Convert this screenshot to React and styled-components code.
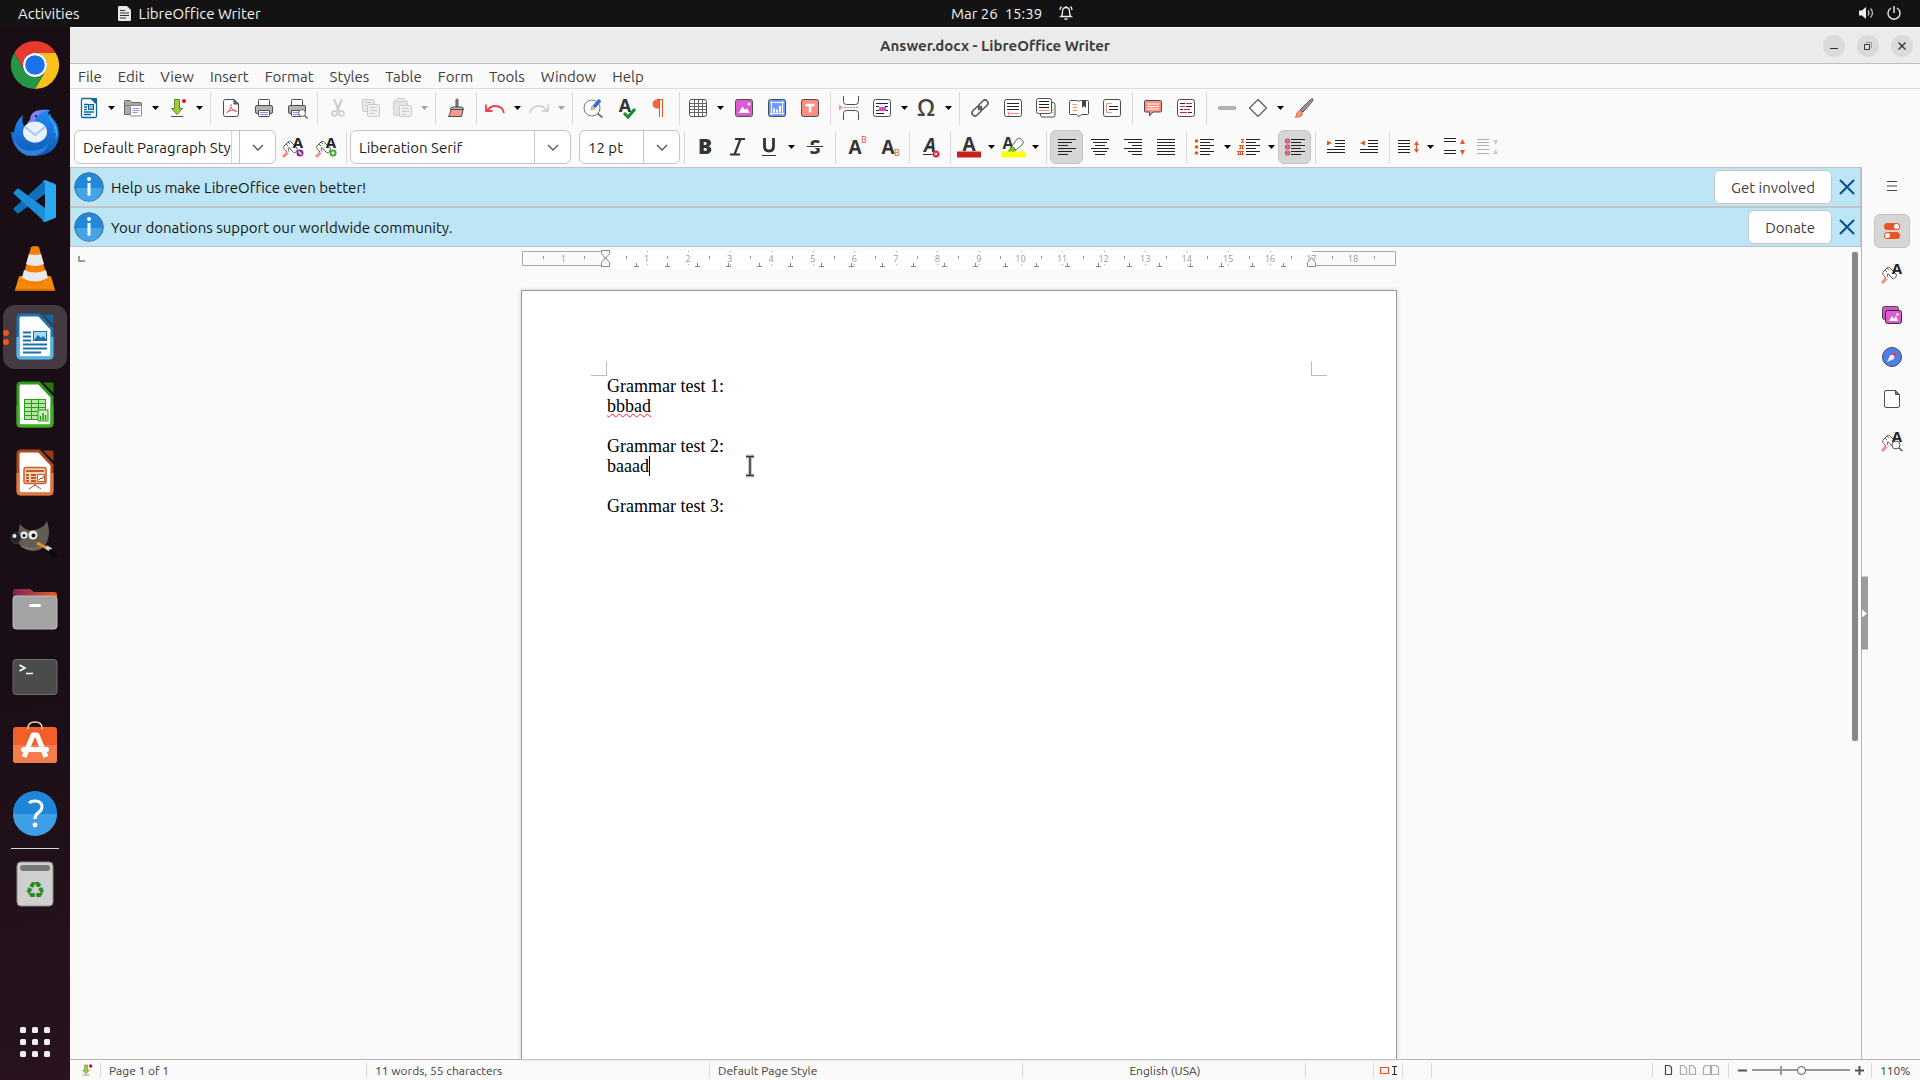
import styled, { createGlobalStyle } from 'styled-components';

const GlobalStyle = createGlobalStyle`
    *{
        box-sizing: border-box;
    }
    body{
        margin: 0;
        background: #fafafa;
        color: #3d3d3d;
        font-family: Ubuntu, "Open Sans", sans-serif;
        font-size: 15px;
    }
    button, select, input{
        font: inherit;
        color: inherit;
        margin: 0;
    }
    p{
        margin: 0;
    }
    svg{
        display: block;
        flex: none;
        overflow: visible;
    }
    svg text{
        font-family: "Open Sans", sans-serif;
    }
`

const Desktop = styled.div`
    height: 100vh;
    display: flex;
    flex-direction: column;
    overflow: hidden;
`

const TopBar = styled.header`
    height: 27px;
    flex: none;
    display: grid;
    grid-template-columns: calc(50% - 9px) 1fr auto;
    align-items: center;
    padding-bottom: 1px;
    background: #131313;
    color: #f2f2f2;
    white-space: pre;
`

const TopGroup = styled.div`
    display: flex;
    align-items: center;
    gap: ${p => p.$gap}px;
    padding: 0 ${p => p.$pad}px;
`

const AppName = styled.div`
    display: flex;
    align-items: center;
    gap: 8px;
`

const Screen = styled.div`
    flex: 1;
    min-height: 0;
    display: flex;
`

const Dock = styled.nav`
    width: 70px;
    flex: none;
    display: flex;
    flex-direction: column;
    align-items: center;
    gap: 4px;
    padding: 6px 0;
    background: linear-gradient(165deg, #1a0e16 60%, #28131f);
`

const DockItem = styled.button`
    width: 64px;
    height: 64px;
    flex: none;
    display: flex;
    align-items: center;
    justify-content: center;
    padding: 0;
    border: 0;
    border-radius: 12px;
    background: ${p => p.$active ? '#433b41' : 'none'};
    position: relative;
`

const RunningDots = styled.span`
    position: absolute;
    left: 0;
    top: 25px;
    display: grid;
    gap: 3px;
    i{
        width: 6px;
        height: 6px;
        border-radius: 3px;
        background: #e95420;
    }
`

const DockLine = styled.hr`
    width: 48px;
    height: 1px;
    margin: -1px 0;
    border: 0;
    flex: none;
    background: #d8d4d6;
`

const DockSpace = styled.div`
    flex: 1;
`

const Window = styled.main`
    flex: 1;
    min-width: 0;
    display: flex;
    flex-direction: column;
`

const TitleBar = styled.div`
    height: 37px;
    flex: none;
    display: grid;
    grid-template-columns: 1fr auto 1fr;
    align-items: center;
    background: #ebebeb;
    border-top: 1px solid #fff;
    border-bottom: 1px solid #bfbfbf;
    h1{
        grid-column: 2;
        margin: 0;
        font-size: 15px;
        font-weight: bold;
    }
`

const WindowButtons = styled.div`
    display: flex;
    justify-content: flex-end;
    gap: 12px;
    padding-right: 7px;
    button{
        width: 22px;
        height: 22px;
        padding: 0;
        border: 0;
        border-radius: 11px;
        background: #dadada;
    }
`

const MenuBar = styled.nav`
    height: 25px;
    flex: none;
    display: flex;
    align-items: center;
    padding-top: 1px;
    border-bottom: 1px solid #dcdcdc;
    button{
        border: 0;
        background: none;
        padding: 0 8px;
        line-height: 20px;
    }
`

const Toolbar = styled.div`
    height: ${p => p.$height}px;
    flex: none;
    display: flex;
    align-items: center;
    padding-left: 4px;
`

const Tool = styled.button`
    width: ${p => p.$drop ? 44 : 33}px;
    height: 34px;
    flex: none;
    display: flex;
    align-items: center;
    justify-content: ${p => p.$drop ? 'flex-start' : 'center'};
    gap: 7px;
    padding: 0 0 0 ${p => p.$drop ? 3 : 0}px;
    border: 1px solid ${p => p.$active ? '#c3c3c3' : 'transparent'};
    border-width: ${p => p.$active ? 1 : 0}px;
    border-radius: 6px;
    background: ${p => p.$active ? '#d6d6d6' : 'none'};
    opacity: ${p => p.$dim ? 0.35 : 1};
`

const Separator = styled.span`
    width: 1px;
    height: 33px;
    flex: none;
    margin: 0 3px 0 4px;
    background: ${p => p.$hidden ? 'transparent' : '#dadada'};
`

const Combo = styled.div`
    width: ${p => p.$width}px;
    height: 34px;
    flex: none;
    display: flex;
    border: 1px solid #c4c4c4;
    border-radius: 6px;
    background: #fff;
    color: #1c1c1c;
    overflow: hidden;
    select{
        flex: 1;
        min-width: 0;
        appearance: none;
        border: 0;
        border-right: ${p => p.$split ? '1px solid #d4d4d4' : '0'};
        margin-right: ${p => p.$split ? 7 : 0}px;
        padding: 0 0 0 8px;
        background: none;
        color: #1c1c1c;
        text-overflow: clip;
    }
    button{
        width: 36px;
        display: flex;
        align-items: center;
        justify-content: center;
        padding: 0;
        border: 0;
        border-left: 1px solid #c4c4c4;
        background: none;
    }
`

const Body = styled.div`
    flex: 1;
    min-height: 0;
    display: flex;
`

const Editor = styled.section`
    flex: 1;
    min-width: 0;
    display: flex;
    flex-direction: column;
`

const InfoBar = styled.div`
    height: 40px;
    flex: none;
    display: flex;
    align-items: center;
    padding: 0 5px 0 3px;
    border: 1px solid #c3c3c3;
    background: #bce5f6;
    color: #141414;
    p{
        flex: 1;
        padding-left: 7px;
    }
`

const InfoButton = styled.button`
    height: 34px;
    padding: 0 16px;
    border: 1px solid #c8c8c8;
    border-radius: 6px;
    background: #fff;
    color: #3d3d3d;
`

const CloseInfo = styled.button`
    display: flex;
    padding: 0 0 0 7px;
    border: 0;
    background: none;
`

const Viewport = styled.div`
    flex: 1;
    min-height: 0;
    display: flex;
`

const Canvas = styled.div`
    flex: 1;
    min-width: 0;
    display: flex;
    flex-direction: column;
    align-items: center;
`

const RulerRow = styled.div`
    width: 100%;
    height: 43px;
    flex: none;
    display: grid;
    grid-template-columns: 1fr auto 1fr;
    padding: 3px 0 0;
`

const TabCorner = styled.span`
    width: 7px;
    height: 6px;
    margin: 6px 8px;
    border-left: 2px solid #9a9a9a;
    border-bottom: 2px solid #9a9a9a;
`

const Page = styled.article`
    width: 876px;
    flex: 1;
    padding-top: 70px;
    border: 1px solid #999;
    border-bottom: 0;
    background: #fff;
    box-shadow: 0 0 4px #ccc;
    position: relative;
    color: #000;
    font-family: "Liberation Serif", serif;
    font-size: 18px;
    line-height: 20px;
`

const MarginMarks = styled.div`
    display: flex;
    justify-content: space-between;
    margin: 0 69px;
    span{
        width: 16px;
        height: 15px;
        border-bottom: 1px solid #bcbcbc;
    }
    span:first-child{
        border-right: 1px solid #bcbcbc;
    }
    span:last-child{
        border-left: 1px solid #bcbcbc;
    }
`

const PageText = styled.div`
    padding: 0 85px;
    p{
        min-height: 20px;
    }
`

const Misspelt = styled.span`
    text-decoration: underline wavy #f22 1px;
    text-decoration-skip-ink: none;
    text-underline-offset: 1px;
`

const Caret = styled.span`
    display: inline-block;
    width: 1px;
    height: 20px;
    margin-right: -1px;
    vertical-align: top;
    background: #000;
`

const Pointer = styled.svg`
    position: absolute;
    left: 221px;
    top: 162px;
`

const ScrollTrack = styled.div`
    width: 13px;
    flex: none;
    padding: 5px 3px 5px 4px;
    span{
        display: block;
        height: 61%;
        border-radius: 2px;
        background: #888;
    }
`

const Sidebar = styled.aside`
    width: 59px;
    flex: none;
    display: flex;
    flex-direction: column;
    align-items: center;
    gap: 8px;
    padding: 2px 0 0 2px;
    border-left: 1px solid #b8b8b8;
    position: relative;
`

const SideButton = styled.button`
    width: 36px;
    height: 34px;
    display: flex;
    align-items: center;
    justify-content: center;
    padding: 0;
    border: 1px solid ${p => p.$active ? '#c3c3c3' : 'transparent'};
    border-radius: 6px;
    background: ${p => p.$active ? '#d6d6d6' : 'none'};
    &:first-child{
        margin-bottom: 3px;
    }
`

const SideHandle = styled.button`
    position: absolute;
    left: -1px;
    top: 50%;
    transform: translateY(-50%);
    width: 7px;
    height: 73px;
    display: flex;
    align-items: center;
    padding: 0 0 0 1px;
    border: 0;
    background: #9b9b9b;
`

const StatusBar = styled.footer`
    height: 21px;
    flex: none;
    display: grid;
    grid-template-columns: 31px 266fr 343fr 313fr 283fr 68px 29px 29px 221fr 76px 143px 48px;
    align-items: center;
    border-top: 1px solid #b5b5b5;
    font-size: 12px;
    white-space: nowrap;
`

const Status = styled.div`
    height: 15px;
    display: flex;
    align-items: center;
    justify-content: ${p => p.$center ? 'center' : 'flex-start'};
    gap: 4px;
    padding-left: ${p => p.$center ? 2 : 8}px;
    border-right: 1px solid ${p => p.$last ? 'transparent' : '#dadada'};
`

const ZoomControl = styled.div`
    height: 15px;
    display: flex;
    align-items: center;
    justify-content: center;
    gap: 5px;
    padding-left: 2px;
    border-right: 1px solid #dadada;
    button{
        display: flex;
        padding: 0;
        border: 0;
        background: none;
    }
    input{
        width: 98px;
        height: 12px;
        appearance: none;
        background: linear-gradient(#999, #999) 28px 2px / 2px 9px no-repeat,
            linear-gradient(#999, #999) 0 5px / 100% 2px no-repeat;
    }
    input::-webkit-slider-thumb{
        appearance: none;
        width: 9px;
        height: 9px;
        border: 1px solid #555;
        border-radius: 5px;
        background: #fff;
    }
`

const Icon = ({ size = 24, box = 24, children }) => (
    <svg width={size} height={size} viewBox={`0 0 ${box} ${box}`} fill="none" aria-hidden="true">{children}</svg>
)

const DownArrow = () => <svg width="7" height="4" viewBox="0 0 7 4"><path d="M0 0h7L3.500 4z" fill="#000" /></svg>

const DARK = '#4d4d4d'

/* small pieces shared by several toolbar icons */
const Sheet = ({ x = 3.5, y = 3.5, w = 17, h = 17 }) => <rect x={x} y={y} width={w} height={h} rx="2" fill="#fff" stroke={DARK} />
const Lines = ({ d, c = '#222', w = 1 }) => <path d={d} stroke={c} strokeWidth={w} />
const Letter = ({ x = 12, y = 18, s = 20, c = '#333', children, ...rest }) => (
    <text x={x} y={y} fontSize={s} fontWeight="bold" textAnchor="middle" fill={c} {...rest}>{children}</text>
)
const StyleBrush = ({ y = 9 }) => (
    <>
        <path d="M2 22l4.500-4.500" stroke="#fa8f80" strokeWidth="3" />
        <path d="M6 17c-3-3-4-4-3-6l4-4c2-1 3-1 4 1l5 5c1 1 0 3-1 4s-2 1-3 0L8 12.500c-1 1-1 2 0 4" fill="#fff" stroke="#555" />
        <path d="M5 9l2 2M7 7l2 2" stroke="#555" />
        <Letter x={17} y={y + 4} s={15} c="#222">A</Letter>
    </>
)
const Printer = () => (
    <>
        <path d="M6.500 9V4.500q0-1 1-1h9q1 0 1 1V9" fill="#fff" stroke={DARK} />
        <rect x="3.500" y="9.500" width="17" height="8" rx="1.500" fill="#b5b5b5" stroke={DARK} />
        <path d="M6.500 14.500h11v5q0 1-1 1h-9q-1 0-1-1z" fill="#fff" stroke={DARK} />
        <path d="M8 16.500h8M8 18.500h8" stroke="#8d8dfc" />
    </>
)
const SaveArrow = () => (
    <>
        <path d="M9.500 3.500h5v9h3L12 18.500 6.500 12.500h3z" fill="#9ace3a" stroke="#5f8526" />
        <path d="M6 20.500h12" stroke={DARK} />
    </>
)
const Magnifier = () => (
    <>
        <circle cx="17" cy="17" r="3.500" fill="#fafafa" stroke="#666" />
        <path d="M19.500 19.500l3 3" stroke="#666" strokeWidth="1.500" />
    </>
)

const icons = {
    new: <>
        <path d="M5.500 2.500H14l5.500 5v12.500q0 1.500-1.500 1.500H6q-1.500 0-1.500-1.500V4q0-1.500 1-1.500z" fill="#fff" stroke="#0369a3" strokeWidth="1.300" />
        <path d="M13 2h6q1 0 1 1v6z" fill="#0369a3" />
        <Lines d="M7 8.500h4M7 11h3M7 13.500h3M7 16h10M7 18.500h7" c="#0369a3" w={1.3} />
        <rect x="11.500" y="8.500" width="5" height="5" fill="#7cc4ea" stroke="#0369a3" />
    </>,
    open: <>
        <path d="M3.500 18.500v-13q0-1 1-1H9l2 2h8q1.500 0 1.500 1.500v10.500z" fill="#a9a9a9" stroke="#666" />
        <path d="M3.500 9.500h6l1-1" stroke="#777" />
        <rect x="9.500" y="9.500" width="11" height="10.500" rx="1" fill="#fff" stroke="#888" />
        <path d="M11.500 12.500h7M11.500 14.500h7M11.500 16.500h5" stroke="#8d8dfc" />
    </>,
    save: <><SaveArrow /><circle cx="19" cy="5" r="2" fill="#d2142c" /></>,
    pdf: <>
        <path d="M15 3.500H6.500q-2 0-2 2v13q0 2 2 2h11q2 0 2-2V8z" fill="#fff" stroke={DARK} />
        <path d="M15 3.500V8h4.500z" fill="#777" stroke={DARK} />
        <path d="M7.500 17c3-2 5-6 4.500-9M12 11c1 3 3 4 6 4.500M8 16.500c2-2 6-3 9-2" stroke="#ee5566" />
    </>,
    print: <Printer />,
    preview: <><Printer /><Magnifier /></>,
    cut: <>
        <path d="M8 3l5 12M16 3l-5 12" stroke="#777" strokeWidth="2" />
        <circle cx="8.500" cy="17.500" r="2.500" stroke="#777" strokeWidth="1.500" />
        <circle cx="15.500" cy="17.500" r="2.500" stroke="#777" strokeWidth="1.500" />
    </>,
    copy: <>
        <rect x="3.500" y="3.500" width="12" height="12" rx="1.500" fill="#ccc" stroke="#777" />
        <rect x="8.500" y="8.500" width="12" height="12" rx="1.500" fill="#ddd" stroke="#777" />
        <path d="M6 6.500h7M6 9.500h2M11 11.500h7M11 14.500h7M11 17.500h4" stroke="#777" />
    </>,
    paste: <>
        <rect x="3.500" y="4.500" width="14" height="15" rx="2" fill="#bbb" stroke="#777" />
        <rect x="7" y="2.500" width="7" height="3" rx="1" fill="#ddd" stroke="#777" />
        <rect x="9.500" y="9.500" width="12" height="11" rx="1" fill="#ddd" stroke="#777" />
        <path d="M12 12.500h7M12 15.500h7M12 18.500h4" stroke="#777" />
    </>,
    clone: <>
        <path d="M12 4q0-1 1-1t1 1v7h-2z" fill="#999" stroke={DARK} />
        <path d="M6.500 13.500q0-2.500 2.500-2.500h8q2.500 0 2.500 2.500z" fill="#bbb" stroke={DARK} />
        <path d="M7 13.500h12l-1.500 7h-13q2-3 2.500-7z" fill="#fa9a8a" stroke={DARK} />
    </>,
    undo: <path d="M21 17c-1-5-5-7-9-7-3 0-6 2-8.500 5M3 8.500V15h6.500" stroke="#f33d4f" strokeWidth="1.800" />,
    redo: <path d="M3 17c1-5 5-7 9-7 3 0 6 2 8.500 5M21 8.500V15h-6.500" stroke="#777" strokeWidth="1.500" />,
    find: <>
        <circle cx="11" cy="12" r="8" fill="#fff" stroke="#777" />
        <path d="M16.500 17.500l5 4" stroke="#777" strokeWidth="2" />
        <path d="M13 11l6-7" stroke="#3465d9" strokeWidth="3.500" />
        <path d="M10 14l1-4 3 3z" fill="#fcc98a" stroke="#666" strokeWidth=".5" />
    </>,
    spell: <><Letter x={11} y={16} s={18}>A</Letter><path d="M10 17l4 4 7-8" stroke="#168c2c" strokeWidth="3" /></>,
    pilcrow: <>
        <path d="M13 3.500h-3a4.500 4.500 0 0 0 0 9h3z" fill="#f06a38" />
        <path d="M12.500 3v18M15.500 3v18M10 3.500h6" stroke="#e95420" />
    </>,
    table: <><Sheet /><path d="M4 7.500h16M4 10.500h16M4 13.500h16M4 16.500h16M8.500 4v16M12.500 4v16M16.500 4v16" stroke="#666" /></>,
    image: <>
        <rect x="3.500" y="3.500" width="17" height="17" rx="2" fill="#da5cd0" stroke={DARK} />
        <path d="M6.500 17l4-6.500 2.500 3.500 2-2 2.500 5z" fill="#fff" /><circle cx="17" cy="8" r="1.500" fill="#fff" />
    </>,
    chart: <>
        <rect x="3.500" y="3.500" width="17" height="17" rx="2" fill="#729fff" stroke={DARK} />
        <path d="M6.500 5v14M5 6.500h14M17.500 5v14M5 17.500h14" stroke="#fff" />
        <path d="M9 16.500v-4M12 16.500v-3M15 16.500V10" stroke="#fff" strokeWidth="2" />
    </>,
    textbox: <>
        <rect x="3.500" y="3.500" width="17" height="17" rx="2" fill="#fc8f80" stroke={DARK} />
        <path d="M7.500 9h9M12 8v8.500" stroke="#fff" strokeWidth="2.500" />
    </>,
    pagebreak: <>
        <path d="M4.500 0v5.500q0 3 3 3h9q3 0 3-3V0M4.500 24v-6.500q0-3 3-3h9q3 0 3 3V24" fill="#fff" stroke={DARK} />
        <path d="M5 11.500h15" stroke="#e86bd6" strokeDasharray="2 1" /><path d="M0 8.500v6l4-3z" fill="#f08be0" />
    </>,
    field: <><Sheet /><Lines d="M6 7.500h12M6 10.500h3M6 14.500h3M15 10.500h3M15 14.500h3M6 17.500h8" /><rect x="9" y="11" width="7" height="4" fill="#d64fc7" /></>,
    omega: <Letter y={20} s={23} c="#444" fontWeight="600">Ω</Letter>,
    link: <g transform="rotate(-45 12 12)" stroke="#555"><rect x="2" y="9" width="11" height="6" rx="3" strokeWidth="1.500" /><rect x="11" y="9" width="11" height="6" rx="3" strokeWidth="1.500" /><path d="M9 12h6" /></g>,
    footnote: <><Sheet /><Lines d="M6 7.500h12M6 10.500h12M6 13.500h12" /><Lines d="M7 17.500h11M7.500 15.500v4" c="#fa8f80" /></>,
    endnote: <>
        <Sheet x={6.500} y={6.500} w={14.500} h={14.500} />
        <path d="M19 13v6" stroke="#fa8f80" strokeDasharray="2 1" />
        <Sheet x={2.500} y={2.500} w={15} h={15} />
        <Lines d="M5 5.500h10M5 8.500h10M5 11.500h10" /><Lines d="M5 14.500h10" c="#fa8f80" />
    </>,
    bookmark: <>
        <path d="M2.500 5.500q0-1 1-1h6q2 0 2.500 1 .5-1 2.500-1h6q1 0 1 1v12q0 1-1 1h-6l-2.500 2-2.500-2h-6q-1 0-1-1z" fill="#fff" stroke={DARK} />
        <Lines d="M5.500 8.500H10M5.500 11.500H10M5.500 14.500H10" c="#fa8f80" /><path d="M15 4h4v8l-2-2-2 2z" fill="#444" />
    </>,
    crossref: <><Sheet /><Lines d="M12 7.500H6.500v9H12" c="#fa8f80" /><Lines d="M9 10.500h9M9 13.500h9" /></>,
    comment: <>
        <path d="M4.500 4.500h15q1 0 1 1v9.500q0 1-1 1H12l-3.500 4V16h-4q-1 0-1-1V5.500q0-1 1-1z" fill="#fc8f80" stroke={DARK} />
        <path d="M6 8h12M6 10.500h12M6 13h12" stroke="#fff" />
    </>,
    track: <><Sheet /><Lines d="M6 7.500h5M12 10.500h6M6 13.500h3M14 16.500h4" /><Lines d="M12 7.500h6M6 10.500h5M10 13.500h6M6 16.500h7" c="#c9263d" /></>,
    line: <rect x="3.500" y="11" width="17" height="2" rx="1" fill="#fff" stroke="#666" />,
    diamond: <path d="M12 3.500l8.500 8.500-8.500 8.500L3.500 12z" fill="#fff" stroke="#555" strokeWidth="1.200" />,
    paint: <>
        <path d="M8 14L18 4q2-1.500 3-1-.2 2-1.500 3.500L11 16z" fill="#999" stroke={DARK} />
        <path d="M3 21q1.500-1 2-4 1-2.500 3.500-2.500 3 2 1.500 4.500-2 3-7 2z" fill="#fc9080" stroke="#e06b55" />
    </>,
    styleUpdate: <><StyleBrush /><circle cx="19" cy="18" r="3.500" fill="#8b2f8f" /><path d="M17.500 16.500l3 3" stroke="#fff" strokeWidth="1.500" /></>,
    styleNew: <><StyleBrush /><circle cx="19" cy="18" r="3.500" fill="#43a52b" /><path d="M19 16v4M17 18h4" stroke="#fff" /></>,
    bold: <Letter y={19} s={21} fontWeight="800">B</Letter>,
    italic: <path d="M9 4h10M4 19.500h10M14.500 4L8.500 19.500" stroke="#333" strokeWidth="2.200" />,
    underline: <><path d="M7.500 3v8.500q0 4.500 4.500 4.500t4.500-4.500V3" stroke="#333" strokeWidth="2.800" /><path d="M5 20.500h14" stroke="#333" /></>,
    strike: <><Letter y={19} s={20}>S</Letter><path d="M4 11.500h16" stroke="#fafafa" strokeWidth="3" /><path d="M4 11.500h16" stroke="#333" /></>,
    sup: <><Letter x={11} y={19} s={19}>A</Letter><Letter x={20} y={8} s={9} c="#e95420" fontWeight="400">B</Letter></>,
    sub: <><Letter x={11} y={19} s={19}>A</Letter><Letter x={20} y={21} s={9} c="#e95420" fontWeight="400">B</Letter></>,
    clear: <><Letter y={17} s={19} fontStyle="italic">A</Letter><path d="M5 19.500h9" stroke="#333" /><circle cx="18" cy="19" r="3.500" fill="#d02c48" /><path d="M16.500 17.500l3 3M19.500 17.500l-3 3" stroke="#fff" /></>,
    color: <><Letter y={16} s={19}>A</Letter><path d="M0 19.500h24" stroke="#cb2020" strokeWidth="6" /></>,
    highlight: <>
        <Letter x={7} y={14} s={16}>A</Letter><path d="M11 11l5-7q2-2 4 0l2 2q1 2-1 4l-6 5z" fill="#fff" stroke="#666" />
        <path d="M7 17l4-6 4 4-5 3z" fill="#74c22f" stroke="#4d8f1f" /><path d="M0 19.500h24" stroke="#ff0" strokeWidth="6" />
    </>,
    left: <Lines d="M3 4.500h18M3 7.500h14M3 10.500h10M3 13.500h18M3 16.500h14M3 19.500h10" />,
    center: <Lines d="M3 4.500h18M5 7.500h14M7 10.500h10M3 13.500h18M5 16.500h14M7 19.500h10" />,
    right: <Lines d="M3 4.500h18M7 7.500h14M11 10.500h10M3 13.500h18M7 16.500h14M11 19.500h10" />,
    justify: <Lines d="M3 4.500h18M3 7.500h18M3 10.500h18M3 13.500h18M3 16.500h18M3 19.500h18" />,
    bullets: <>
        <Lines d="M7 4.500h14M7 7.500h10M7 10.500h14M7 13.500h10M7 16.500h14M7 19.500h10" />
        <circle cx="3.500" cy="6" r="1.800" fill="#e95420" /><circle cx="3.500" cy="12" r="1.800" fill="#e95420" /><circle cx="3.500" cy="18" r="1.800" fill="#e95420" />
    </>,
    numbers: <>
        <Lines d="M9 4.500h14M9 7.500h10M9 10.500h14M9 13.500h10M9 16.500h14M9 19.500h10" />
        <path d="M4 4.500h3M5.500 4v4M4 7.500h3M2 10.500h5M3.500 10v4M5.500 10v4M2 13.500h5M0 16.500h7M1.500 16v4M3.500 16v4M5.500 16v4M0 19.500h7" stroke="#e95420" />
    </>,
    nolist: <>
        <Lines d="M8 4.500h14M8 7.500h10M8 10.500h14M8 13.500h10M8 16.500h14M8 19.500h10" />
        <path d="M3 4.500l3 3M6 4.500l-3 3M3 10.500l3 3M6 10.500l-3 3M3 16.500l3 3M6 16.500l-3 3" stroke="#cf2f4c" />
        <g stroke="#cf2f4c"><circle cx="4.500" cy="6" r="2.200" /><circle cx="4.500" cy="12" r="2.200" /><circle cx="4.500" cy="18" r="2.200" /></g>
    </>,
    indent: <><Lines d="M11 5.500h10M11 8.500h10M11 11.500h10M3 14.500h18M3 17.500h18" /><path d="M3 5.500v5l5-2.500z" fill="#e95420" /></>,
    outdent: <><Lines d="M11 5.500h10M11 8.500h10M11 11.500h10M3 14.500h18M3 17.500h18" /><path d="M8 5.500v5L3 8z" fill="#e95420" /></>,
    spacing: <><Lines d="M2 5.500h12M2 8.500h12M2 11.500h12M2 14.500h12M2 17.500h12" /><path d="M20.500 8v8" stroke="#e95420" /><path d="M18 10l2.500-4 2.500 4zM18 14l2.500 4 2.500-4z" fill="#e95420" /></>,
    paraMore: <><Lines d="M2 3.500h12M2 6.500h12M2 15.500h12M2 18.500h12" /><path d="M18 9l2.500-5L23 9zM18 15l2.500 5 2.500-5z" fill="#e95420" /></>,
    paraLess: <><Lines d="M2 4.500h12M2 7.500h12M2 10.500h12M2 14.500h12M2 18.500h12" /><path d="M18 5l2.500 5L23 5zM18 19l2.500-5 2.500 5z" fill="#777" /></>,
    menu: <Lines d="M7 7.500h10M7 12h10M7 16.500h10" c="#444" />,
    properties: <>
        <rect x="4" y="4" width="16" height="7" rx="3.500" fill="#e95420" /><circle cx="16.500" cy="7.500" r="2.500" fill="#fff" />
        <rect x="4" y="13" width="16" height="7" rx="3.500" fill="#e95420" /><circle cx="7.500" cy="16.500" r="2.500" fill="#fff" />
    </>,
    styles: <StyleBrush />,
    gallery: <>
        <rect x="2.500" y="3.500" width="16" height="13" rx="2" fill="#d352c9" stroke={DARK} />
        <rect x="5.500" y="7.500" width="16" height="13" rx="2" fill="#da5cd0" stroke="#333" />
        <path d="M9 18l3-5 2 3 2-3 2 5z" fill="#fff" /><circle cx="17.500" cy="11.500" r="1.300" fill="#fff" />
    </>,
    navigator: <>
        <circle cx="12" cy="12" r="9.500" fill="#4f7ee8" stroke="#3f4a66" />
        <path d="M17 7l-3 6.500L10.500 10z" fill="#e33b4b" />
        <path d="M7 17l3-6.500q3-1.500 4 .5t0 3z" fill="#eee" />
    </>,
    page: <><path d="M15.500 3.500H6q-1.500 0-1.500 1.500v14q0 1.500 1.500 1.500h12q1.500 0 1.500-1.500V7.500z" fill="#fff" stroke={DARK} /><path d="M15.500 3.500v4h4z" fill="#777" stroke={DARK} /></>,
    inspector: <><StyleBrush /><circle cx="16" cy="16" r="4" fill="#fafafa" stroke="#555" /><path d="M19 19l3.500 3" stroke="#555" strokeWidth="1.500" /></>,
}

/* a plain name is a button, ">" adds a drop-down arrow, "*" is pressed, "-" is disabled, "|" is a separator */
const standardBar = [
    'new>', 'open>', 'save>', '|', 'pdf', 'print', 'preview', '|', 'cut-', 'copy-', 'paste>-', '|', 'clone', '|',
    'undo>', 'redo>-', '|', 'find', 'spell', 'pilcrow', '|', 'table>', 'image', 'chart', 'textbox', '|',
    'pagebreak', 'field>', 'omega>', '|', 'link', 'footnote', 'endnote', 'bookmark', 'crossref', '|',
    'comment', 'track', '|', 'line', 'diamond>', 'paint',
]
const formatBar = [
    '|', 'bold', 'italic', 'underline>', 'strike', '|', 'sup', 'sub', '|', 'clear', '|', 'color>', 'highlight>', '|',
    'left*', 'center', 'right', 'justify', '|', 'bullets>', 'numbers>', 'nolist*', '|', 'indent', 'outdent', '|',
    'spacing>', 'paraMore', 'paraLess-',
]

const Tools = ({ items }) => items.map((item, i) => {
    if (item === '|') return <Separator key={i} />
    const name = item.replace(/[>*-]/g, '')
    const drop = item.includes('>')
    return (
        <Tool key={i} aria-label={name} $drop={drop} $active={item.includes('*')} $dim={item.includes('-')}>
            <Icon>{icons[name]}</Icon>
            {drop && <DownArrow />}
        </Tool>
    )
})

const ComboBox = ({ label, value, width, split }) => (
    <Combo $width={width} $split={split}>
        <select aria-label={label} defaultValue={value}><option>{value}</option></select>
        <button aria-label={`Open ${label}`}>
            <svg width="12" height="7" viewBox="0 0 12 7" fill="none"><path d="M1 1l5 5 5-5" stroke="#555" strokeWidth="1.300" /></svg>
        </button>
    </Combo>
)

const OfficeDoc = ({ color, dark, light, children }) => (
    <Icon size={48} box={48}>
        <path d="M9 2h19l13 14v26q0 3-3 3H10q-3 0-3-3V5q0-3 3-3z" fill="#fff" stroke={color} strokeWidth="3" />
        <path d="M7 24v18q0 3 3 3h28q3 0 3-3V24" stroke={light} strokeWidth="3" />
        <path d="M32 1.500h9q1.500 0 1.500 1.500v9z" fill={dark} />
        {children}
    </Icon>
)

const dockIcons = {
    Chrome: <Icon size={48} box={48}>
        <path d="M3.200 12A24 24 0 0 1 44.800 12H24A12 12 0 0 0 13.600 30z" fill="#e33b2e" />
        <path d="M44.800 12A24 24 0 0 1 24 48l10.400-18A12 12 0 0 0 24 12z" fill="#fcc21b" />
        <path d="M24 48A24 24 0 0 1 3.200 12l10.400 18a12 12 0 0 0 20.800 0z" fill="#269646" />
        <circle cx="24" cy="24" r="12" fill="#fff" /><circle cx="24" cy="24" r="9.800" fill="#1a73e8" />
    </Icon>,
    Thunderbird: <Icon size={48} box={48}>
        <defs><linearGradient id="bird" x1="0" y1="0" x2="0" y2="1"><stop offset="0" stopColor="#1f8df5" /><stop offset="1" stopColor="#1259b8" /></linearGradient></defs>
        <path d="M0 22q2 3 3 1Q4 13 12 6q-2 8 2 12l5-7Q19 2 29 1q5-1 10 0-2 2-2 4 11 8 11 20Q47 46 24 47 1 46 0 22z" fill="url(#bird)" />
        <path d="M19 11Q20 2 30 1l9 0q-11 1-15 10-3 3-8 3z" fill="#8b7df0" />
        <path d="M39 5q-2 3 2 7 4 5 3 12M44 16q3 6 1 13" stroke="#4db3ff" />
        <circle cx="25" cy="7" r="1.200" fill="#0c3f86" />
        <ellipse cx="24" cy="23" rx="12" ry="10.500" fill="#e8f3ff" />
        <path d="M13.500 18q1 0 2 1l8.500 7 8.500-7q1-1 2-1" stroke="#a5c8ee" strokeWidth="1.800" />
        <path d="M3 29q5 16 24 12 8-2 11-8-5 15-22 14Q4 42 3 29z" fill="#49a9fa" opacity=".5" />
    </Icon>,
    Code: <Icon size={48} box={48}>
        <path d="M34 3v14L8 36q-1 1-2 0l-3-3q-1-1 0-2z" fill="#0f6fb8" />
        <path d="M34 45V31L8 12q-1-1-2 0l-3 3q-1 1 0 2z" fill="#1a8fd8" />
        <path d="M34 3l10 4q1 .5 1 1.500v31q0 1-1 1.500l-10 4q-2 0-3-2 3 1 3-2V7q0-3-3-2z" fill="#29a9f2" />
    </Icon>,
    VLC: <Icon size={48} box={48}>
        <path d="M9 31h30q1 0 1.500 2L44 45q0 1-1 1H5q-1 0-1-1l3.500-12Q8 31 9 31z" fill="#f58a0a" />
        <path d="M4 44h40v2H4z" fill="#d66c00" />
        <path d="M20 2q4-2 8 0l9 34q-13 9-26 0z" fill="#f57f00" />
        <path d="M18 9q6 2 12 0l3 10q-9 4-18 0z" fill="#e9e9e9" />
        <path d="M13 25q11 5 22 0l2 8q-13 7-26 0z" fill="#e9e9e9" />
    </Icon>,
    Writer: <OfficeDoc color="#1a75ae" dark="#11659b" light="#58b4e4">
        <path d="M12 19.500h8M12 23.500h8M12 27.500h8M12 31.500h24M12 35.500h24M12 39.500h18" stroke="#1a70aa" strokeWidth="2" />
        <rect x="22.500" y="18.500" width="13" height="9" fill="#a8d8f0" stroke="#1a70aa" /><path d="M23 27l4-5 3 3 2-2 4 4z" fill="#1a70aa" />
    </OfficeDoc>,
    Calc: <OfficeDoc color="#2d9a1b" dark="#24780f" light="#3cac22">
        <rect x="13.500" y="18.500" width="21" height="20" fill="#b5e6a5" stroke="#2d9a1b" />
        <path d="M14 22.500h20M14 26.500h20M14 30.500h20M14 34.500h20M20.500 19v19M27.500 19v19" stroke="#2d9a1b" />
        <rect x="27" y="29" width="10" height="11" fill="#c8f0bc" stroke="#2d9a1b" /><path d="M29.500 39v-4M32 39v-7M34.500 39v-5" stroke="#2d9a1b" strokeWidth="1.500" />
    </OfficeDoc>,
    Impress: <OfficeDoc color="#b0481a" dark="#963c0f" light="#df7a43">
        <rect x="13" y="18.500" width="22" height="16" rx="2" fill="#f7cfb8" stroke="#c4602c" strokeWidth="1.500" />
        <path d="M15 22h18M15 26h3M20 26h5M15 29h3M20 29h5M15 32h3M20 32h5" stroke="#c05a28" strokeWidth="1.800" />
        <rect x="26.500" y="25.500" width="7" height="7" fill="#fff" stroke="#c4602c" /><path d="M28 31l2-2 1 1 2-3M24 35v2M18 40l6-4 6 4" stroke="#b0481a" />
    </OfficeDoc>,
    GIMP: <Icon size={48} box={48}>
        <path d="M9 7q6 8 14 6 9-1 13-9 4 11 0 21-4 9-14 9-10-1-15-8 0-11 2-19z" fill="#625c52" />
        <path d="M10 29q10 5 20 1" stroke="#7b7568" strokeWidth="1.500" />
        <ellipse cx="5" cy="21" rx="5" ry="5.500" fill="#20262b" stroke="#555" strokeWidth=".5" /><ellipse cx="3.500" cy="19" rx="2" ry="2" fill="#e8eef2" />
        <circle cx="13" cy="18" r="3.500" fill="#eee" /><circle cx="22" cy="18" r="4.500" fill="#eee" />
        <circle cx="13" cy="18.500" r="1.500" fill="#111" /><circle cx="22.500" cy="18.500" r="2" fill="#111" />
        <path d="M26 26l12 6" stroke="#e98f1d" strokeWidth="3" /><path d="M35 30l5 3" stroke="#ccc" strokeWidth="4" /><path d="M39 32q5 1 8 9-8-1-10-6z" fill="#0b0b0d" />
    </Icon>,
    Files: <Icon size={48} box={48}>
        <defs><linearGradient id="folder"><stop offset="0" stopColor="#7a2458" /><stop offset="1" stopColor="#ee5b23" /></linearGradient></defs>
        <path d="M2 7q0-3 3-3h14l4 3h20q3 0 3 3v8H2z" fill="url(#folder)" />
        <rect x="2" y="11" width="44" height="33" rx="3" fill="#a4a4a4" stroke="#bcbcbc" /><rect x="18" y="19" width="12" height="3" rx="1.500" fill="#fff" />
    </Icon>,
    Terminal: <Icon size={48} box={48}>
        <rect x="2" y="6.500" width="44" height="35" rx="3" fill="#4b4b4b" stroke="#6c6c6c" />
        <path d="M8.500 12l5.500 3-5.500 3" stroke="#fff" strokeWidth="1.500" /><path d="M15 20.500h7" stroke="#fff" strokeWidth="1.500" />
    </Icon>,
    Software: <Icon size={48} box={48}>
        <rect x="2" y="6" width="44" height="36" rx="3" fill="#f1602a" /><path d="M2 24h44v15q0 3-3 3H5q-3 0-3-3z" fill="#f47d4e" />
        <path d="M17 8V7q0-6 7-6t7 6v1" stroke="#f6d7a0" strokeWidth="1.500" />
        <path d="M13 36l9-22h4l9 22" stroke="#fff" strokeWidth="5" strokeLinejoin="round" /><rect x="10" y="26" width="28" height="5" rx="2.500" fill="#fff" />
    </Icon>,
    Help: <Icon size={48} box={48}>
        <circle cx="24" cy="24" r="22" fill="#1f86d8" /><path d="M2 25h44a22 22 0 0 1-44 0z" fill="#3f9fe6" />
        <path d="M18 14q2-2 6-2 7 0 7 6 0 3-4 6-3 2-3 6" stroke="#fff" strokeWidth="3" /><circle cx="24" cy="36" r="2.400" fill="#fff" />
    </Icon>,
}

const RecycleMark = styled.text`
    && {
        font-family: "DejaVu Sans", sans-serif;
    }
`

const Trash = () => (
    <Icon size={48} box={48}>
        <rect x="6" y="2" width="36" height="44" rx="4" fill="#cfcfcf" stroke="#8a8a8a" /><rect x="9" y="5" width="30" height="6" rx="3" fill="#777" />
        <RecycleMark x="24" y="38" fontSize="23" textAnchor="middle" fill="#278b1c">♻</RecycleMark>
    </Icon>
)

const InfoIcon = () => (
    <Icon size={30} box={30}>
        <circle cx="15" cy="15" r="14.300" fill="#2288da" stroke="#4c6f91" /><path d="M2 16h26a13 13 0 0 1-26 0z" fill="#44a4e8" />
        <circle cx="15" cy="7" r="2" fill="#fff" /><path d="M15 11v12.500" stroke="#fff" strokeWidth="3" />
    </Icon>
)

const messages = [
    { text: 'Help us make LibreOffice even better!', action: 'Get involved' },
    { text: 'Your donations support our worldwide community.', action: 'Donate' },
]

const range = (from, to) => Array.from({ length: to - from + 1 }, (_, i) => from + i)
const CM = 41.55
const ORIGIN = 84

const Ruler = () => (
    <svg width="876" height="21" viewBox="0 0 876 21" fill="none">
        <path d="M84 1h707v18H84z" fill="#fff" />
        <path d="M84 1.500H1.500v14H84M791 1.500h83.500v14H791" stroke="#aaa" />
        {range(-1, 18).filter(n => n !== 0).map(n => (
            <text key={n} x={ORIGIN + n * CM} y="12" fontSize="9" textAnchor="middle" fill="#999">{Math.abs(n)}</text>
        ))}
        {range(-2, 18).map(n => <path key={n} d={`M${Math.round(ORIGIN + (n + 0.5) * CM)}.5 6v3`} stroke="#999" />)}
        {range(1, 16).map(n => <path key={n} d={`M${Math.round(ORIGIN + n * CM)}.5 1v1M${Math.round(ORIGIN + n * CM)}.5 14v1`} stroke="#aaa" />)}
        {range(1, 22).map(n => <path key={n} d={`M${Math.round(ORIGIN + n * 30.8)}.5 13v4m-2.500-.5h5`} stroke="#888" />)}
        <path d="M80.500.5h8v3l-4 5-4-5zM80.500 16.500h8v-4l-4-5-4 5zM786.500 16.500h8v-4l-4-5-4 5z" fill="#fafafa" stroke="#888" />
    </svg>
)

const Views = () => (
    <svg width="56" height="12" viewBox="0 0 56 12" fill="none">
        <path d="M1.500 1.500h4l2 2v7h-6z" stroke="#444" strokeWidth="1.200" />
        <path d="M16.500 1.500h3l3 3v6h-6zM25.500 1.500h3l3 3v6h-6zM39.500 3.500l2-2h5v9h-7zM54.500 3.500l-2-2h-5v9h7z" stroke="#aaa" strokeWidth="1.200" />
    </svg>
)

function App() {
    return (
        <Desktop>
            <GlobalStyle />
            <TopBar>
                <TopGroup $gap={38} $pad={18}>
                    <span>Activities</span>
                    <AppName>
                        <svg width="13" height="15" viewBox="0 0 13 15"><path d="M1 0h8l4 4v10q0 1-1 1H1q-1 0-1-1V1q0-1 1-1z" fill="#e8e8e8" /><path d="M2 4.500h5M2 7h9M2 9.500h9M2 12h6" stroke="#333" /></svg>
                        <span>LibreOffice Writer</span>
                    </AppName>
                </TopGroup>
                <TopGroup $gap={17} $pad={0}>
                    <time>Mar 26  15:39</time>
                    <svg width="14" height="16" viewBox="0 0 14 16" fill="none" stroke="#eee" strokeWidth="1.300"><path d="M2 11.500q1.500-1 1.500-5 0-4 3.500-4t3.500 4q0 4 1.500 5zM5.500 13.500q1.500 1.500 3 0M7 1v1M1 5q0-2 1.500-3.500M13 5q0-2-1.500-3.500" /></svg>
                </TopGroup>
                <TopGroup $gap={13} $pad={19}>
                    <svg width="15" height="14" viewBox="0 0 15 14" fill="none"><path d="M0 4.500h3L7 1v12L3 9.500H0z" fill="#eee" /><path d="M9 4.500q2 2.500 0 5M11.500 2.500q4 4.500 0 9" stroke="#bbb" strokeWidth="1.300" /></svg>
                    <svg width="14" height="14" viewBox="0 0 14 14" fill="none" stroke="#eee" strokeWidth="1.400"><path d="M4 2a6 6 0 1 0 6 0M7 0v7" /></svg>
                </TopGroup>
            </TopBar>
            <Screen>
                <Dock>
                    {Object.keys(dockIcons).map(name => (
                        <DockItem key={name} aria-label={name} $active={name === 'Writer'}>
                            {name === 'Writer' && <RunningDots><i /><i /></RunningDots>}
                            {dockIcons[name]}
                        </DockItem>
                    ))}
                    <DockLine />
                    <DockItem aria-label="Trash"><Trash /></DockItem>
                    <DockSpace />
                    <DockItem aria-label="Show Applications">
                        <svg width="30" height="30" viewBox="0 0 30 30" fill="#f0eeee">
                            {[0, 12, 24].map(y => [0, 12, 24].map(x => <rect key={x} x={x} y={y} width="6" height="6" rx="1.500" />))}
                        </svg>
                    </DockItem>
                </Dock>
                <Window>
                    <TitleBar>
                        <h1>Answer.docx - LibreOffice Writer</h1>
                        <WindowButtons>
                            <button aria-label="Minimize"><Icon size={22} box={22}><path d="M7 13.500h8" stroke="#333" /></Icon></button>
                            <button aria-label="Restore"><Icon size={22} box={22}><path d="M7.500 9.500h5v5h-5z" stroke="#333" /><path d="M9 7.500h5.500V13" stroke="#999" /></Icon></button>
                            <button aria-label="Close"><Icon size={22} box={22}><path d="M7.500 7.500l7 7M14.500 7.500l-7 7" stroke="#333" strokeWidth="1.400" /></Icon></button>
                        </WindowButtons>
                    </TitleBar>
                    <MenuBar>
                        {['File', 'Edit', 'View', 'Insert', 'Format', 'Styles', 'Table', 'Form', 'Tools', 'Window', 'Help'].map(m => (
                            <button key={m}>{m}</button>
                        ))}
                    </MenuBar>
                    <Toolbar $height={38}><Tools items={standardBar} /></Toolbar>
                    <Toolbar $height={40}>
                        <ComboBox label="Paragraph Style" value="Default Paragraph Style" width={202} split />
                        <Tools items={['styleUpdate', 'styleNew', '|']} />
                        <ComboBox label="Font Name" value="Liberation Serif" width={221} />
                        <Separator $hidden />
                        <ComboBox label="Font Size" value="12 pt" width={101} />
                        <Tools items={formatBar} />
                    </Toolbar>
                    <Body>
                        <Editor>
                            {messages.map(m => (
                                <InfoBar key={m.action}>
                                    <InfoIcon />
                                    <p>{m.text}</p>
                                    <InfoButton>{m.action}</InfoButton>
                                    <CloseInfo aria-label="Close"><Icon size={16} box={16}><path d="M1 1l14 14M15 1L1 15" stroke="#0a4f8c" strokeWidth="2" /></Icon></CloseInfo>
                                </InfoBar>
                            ))}
                            <Viewport>
                                <Canvas>
                                    <RulerRow><TabCorner /><Ruler /></RulerRow>
                                    <Page>
                                        <MarginMarks><span /><span /></MarginMarks>
                                        <PageText>
                                            <p>Grammar test 1:</p>
                                            <p><Misspelt>bbbad</Misspelt></p>
                                            <p />
                                            <p>Grammar test 2:</p>
                                            <p>baaad<Caret /></p>
                                            <p />
                                            <p>Grammar test 3:</p>
                                        </PageText>
                                        <Pointer width="14" height="26" viewBox="0 0 14 26" fill="none">
                                            <path d="M3 3.500h3q1 0 1 1 0-1 1-1h3M7 4v18M3 22.500h3q1 0 1-1 0 1 1 1h3" stroke="#ccc" strokeWidth="4" />
                                            <path d="M3 3.500h3q1 0 1 1 0-1 1-1h3M7 4v18M3 22.500h3q1 0 1-1 0 1 1 1h3" stroke="#333" strokeWidth="1.500" />
                                        </Pointer>
                                    </Page>
                                </Canvas>
                                <ScrollTrack><span /></ScrollTrack>
                            </Viewport>
                        </Editor>
                        <Sidebar>
                            {['menu', 'properties', 'styles', 'gallery', 'navigator', 'page', 'inspector'].map(name => (
                                <SideButton key={name} aria-label={name} $active={name === 'properties'}><Icon>{icons[name]}</Icon></SideButton>
                            ))}
                            <SideHandle aria-label="Hide sidebar"><svg width="5" height="8" viewBox="0 0 5 8"><path d="M0 0l5 4-5 4z" fill="#fff" /></svg></SideHandle>
                        </Sidebar>
                    </Body>
                    <StatusBar>
                        <Status $center><Icon size={14}><SaveArrow /><circle cx="20" cy="5" r="3" fill="#d2142c" /></Icon></Status>
                        <Status>Page 1 of 1</Status>
                        <Status>11 words, 55 characters</Status>
                        <Status>Default Page Style</Status>
                        <Status $center>English (USA)</Status>
                        <Status />
                        <Status $center><svg width="18" height="11" viewBox="0 0 18 11" fill="none"><path d="M.5 2.500h8v6h-8z" stroke="#e95420" strokeWidth="1.200" /><path d="M12 1.500h5M14.500 1.500v8M12 9.500h5" stroke="#333" strokeWidth="1.200" /></svg></Status>
                        <Status />
                        <Status />
                        <Status $center><Views /></Status>
                        <ZoomControl>
                            <button aria-label="Zoom out"><svg width="9" height="9" viewBox="0 0 9 9"><path d="M0 4.500h9" stroke="#555" strokeWidth="2" /></svg></button>
                            <input type="range" aria-label="Zoom" defaultValue="50" />
                            <button aria-label="Zoom in"><svg width="9" height="9" viewBox="0 0 9 9"><path d="M0 4.500h9M4.500 0v9" stroke="#555" strokeWidth="2" /></svg></button>
                        </ZoomControl>
                        <Status $last>110%</Status>
                    </StatusBar>
                </Window>
            </Screen>
        </Desktop>
    )
}

export default App
